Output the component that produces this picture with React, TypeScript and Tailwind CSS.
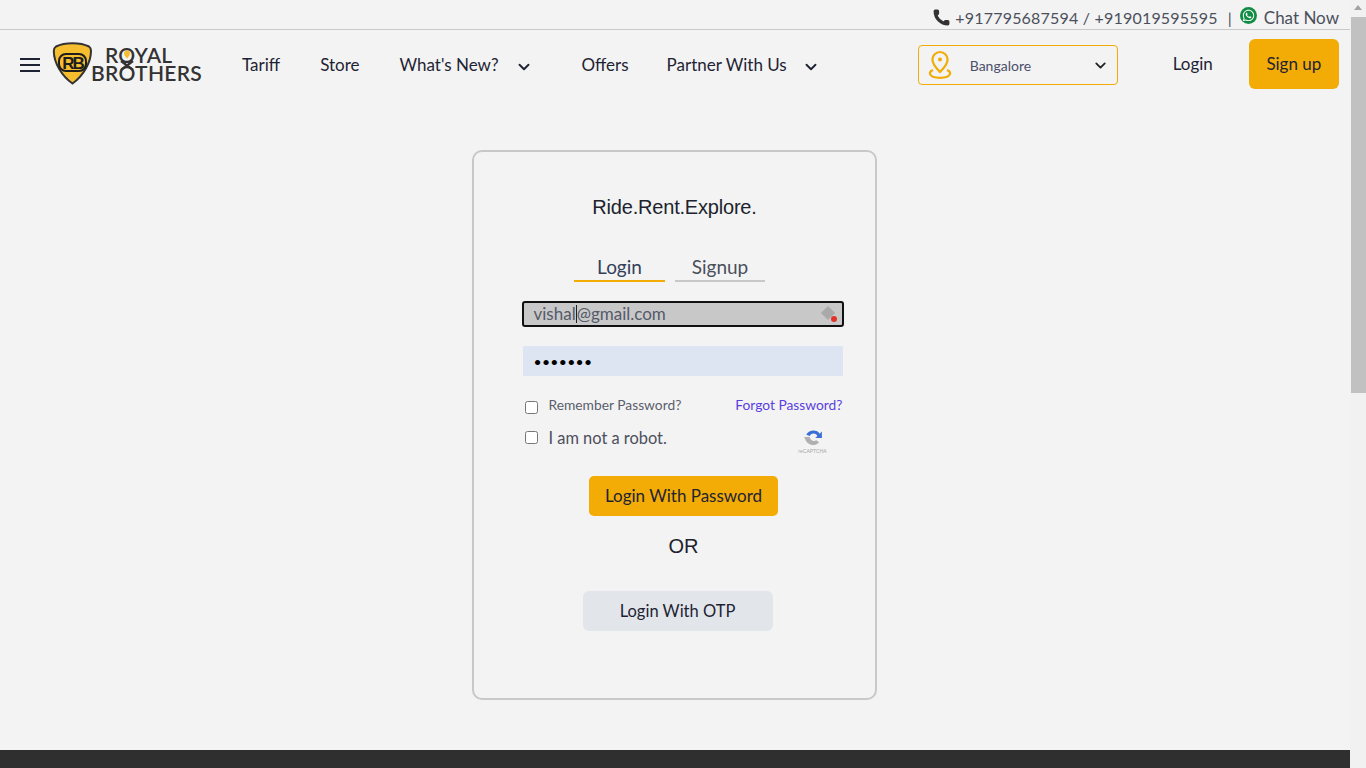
import { ChevronDown, Phone } from 'lucide-react'
import { FaWhatsapp } from 'react-icons/fa'

function Logo() {
  return (
    <svg width="152" height="44" viewBox="0 0 152 44" className="shrink-0">
      <path
        d="M20.500 1.200 C27 1.200 33 2.500 37 4.500 C38.500 5.500 39 7 39 9 C39 20 32 33 20.500 41.500 C10 34 1.800 21 1.800 9 C1.800 7 2.500 5.500 4 4.500 C8 2.500 14 1.200 20.500 1.200 Z"
        fill="#f6bd2f"
        stroke="#333"
        strokeWidth="2"
      />
      <rect x="7" y="12" width="27" height="17" rx="7" fill="none" stroke="#1d1d1d" strokeWidth="2" />
      <text x="20.500" y="27" textAnchor="middle" fontFamily="'Liberation Sans', sans-serif" fontSize="17" fontWeight="700" letterSpacing="-2" fill="#1d1d1d">
        RB
      </text>
      <text x="53" y="20.500" fontFamily="Lato, sans-serif" fontSize="21" fontWeight="600" letterSpacing="0.2" fill="#333">
        ROYAL
      </text>
      <text x="39" y="39" fontFamily="Lato, sans-serif" fontSize="21" fontWeight="600" letterSpacing="0.3" fill="#333">
        BROTHERS
      </text>
      <path d="M69 19 L81 28 M81 19 L69 28" fill="none" stroke="#333" strokeWidth="2.200" />
      <path d="M75 8.500a3 3 0 0 1 3 3c0 2.200-3 5-3 5s-3-2.800-3-5a3 3 0 0 1 3-3Z" fill="#f6bd2f" />
    </svg>
  )
}

function RecaptchaIcon() {
  return (
    <div className="flex flex-col items-center w-[28px]">
      <svg width="22" height="20" viewBox="0 0 18 18">
        <path d="M3 7 A7 7 0 0 1 15 6 L17 4 V10 H11 L13 8 A4 4 0 0 0 6 8 Z" fill="#3b6fd8" />
        <path d="M1 9 H6 A4 4 0 0 0 12 12 L14.500 14 A7.500 7.500 0 0 1 2 11 Z" fill="#b0b0b0" />
      </svg>
      <span className="mt-[1px] text-[5px] leading-[7px] text-[#a8a8a8] font-['Liberation_Sans',sans-serif]">reCAPTCHA</span>
    </div>
  )
}

export default function App() {
  return (
    <div className="flex h-screen overflow-hidden bg-[#f3f3f3] font-['Lato',sans-serif] text-[#1e2333]">
      <div className="flex flex-col flex-1 min-w-0">
        {/* Top strip */}
        <div className="h-[30px] shrink-0 border-b border-[#c9c9c9] flex items-center justify-end pt-[6px] pr-[11px] text-[#4b4f5c]">
          <Phone className="w-[19px] h-[19px] mr-[4px] text-[#333]" fill="#333" strokeWidth={0} />
          <span className="text-[16px] tracking-[0.2px]">+917795687594 / +919019595595</span>
          <span className="ml-[10px] mr-[8px] text-[16px]">|</span>
          <span className="w-[17px] h-[17px] mb-[4px] rounded-full bg-[#128c45] flex items-center justify-center">
            <FaWhatsapp className="w-[13px] h-[13px] text-white" />
          </span>
          <span className="ml-[7px] text-[17px]">Chat Now</span>
        </div>

        {/* Nav */}
        <header className="h-[70px] shrink-0 flex items-center text-[17px]">
          <div className="ml-[20px] w-[20px] flex flex-col gap-[4px]">
            <span className="h-[2px] bg-[#1e2333]" />
            <span className="h-[2px] bg-[#1e2333]" />
            <span className="h-[2px] bg-[#1e2333]" />
          </div>
          <div className="ml-[12px] mb-[2px]">
            <Logo />
          </div>
          <a className="ml-[38px]">Tariff</a>
          <a className="ml-[40px]">Store</a>
          <a className="ml-[40px]">What's New?</a>
          <ChevronDown className="ml-[16px] mt-[3px] w-[18px] h-[18px]" strokeWidth={2.500} />
          <a className="ml-[49px]">Offers</a>
          <a className="ml-[38px]">Partner With Us</a>
          <ChevronDown className="ml-[15px] mt-[3px] w-[18px] h-[18px]" strokeWidth={2.500} />
          <div className="ml-[98px] w-[200px] h-[40px] rounded-[4px] border border-[#f2ac05] flex items-center px-[8px]">
            <svg width="26" height="30" viewBox="0 0 26 30" fill="none" stroke="#f2ac05" strokeWidth="2.200">
              <path d="M13 2a7.600 7.600 0 0 1 7.600 7.600c0 5-7.600 12.400-7.600 12.400S5.400 14.600 5.400 9.600A7.600 7.600 0 0 1 13 2Z" />
              <circle cx="13" cy="9.500" r="2" fill="#f2ac05" stroke="none" />
              <path d="M6 20c-2.400 1-3.500 2.400-3 4 .8 2.400 5 3.800 10 3.800s9.200-1.400 10-3.800c.5-1.600-.6-3-3-4" />
            </svg>
            <span className="ml-[17px] mt-[1px] text-[14px] text-[#4b4f6b] flex-1">Bangalore</span>
            <ChevronDown className="w-[17px] h-[17px] text-[#222]" strokeWidth={2.500} />
          </div>
          <a className="ml-[55px] mb-[2px]">Login</a>
          <button className="ml-[36px] mb-[2px] w-[90px] h-[50px] rounded-[6px] bg-[#f2ac05] text-[#1e2333]">Sign up</button>
        </header>

        {/* Login card */}
        <main className="flex-1 pl-[472px] pt-[50px]">
          <div className="w-[405px] h-[550px] rounded-[10px] border-2 border-[#c8c8c8] pt-[41px] flex flex-col items-center">
            <h1 className="text-[20px] leading-[28px] tracking-[-0.2px] font-['Liberation_Sans',sans-serif] text-[#20232d]">Ride.Rent.Explore.</h1>

            <div className="mt-[31px] mr-[10px] flex gap-[10px] text-[19px] leading-[26px]">
              <div className="w-[91px] h-[30px] pt-[2px] border-b-2 border-[#f2ac05] text-center text-[#33405a]">Login</div>
              <div className="w-[90px] h-[30px] pt-[2px] border-b-2 border-[#c8c8c8] text-center text-[#4b4f5c]">Signup</div>
            </div>

            <div className="mt-[19px] ml-[16px] w-[322px] h-[26px] rounded-[3px] border-2 border-[#111] bg-[#c8c8c8] flex items-center pl-[10px] pr-[5px] text-[17px] text-[#555a68]">
              <span>vishal</span>
              <span className="w-px h-[18px] bg-[#222]" />
              <span className="flex-1">@gmail.com</span>
              <span className="relative w-[14px] h-[16px]">
                <span className="block w-[10px] h-[10px] mt-[2px] rotate-45 bg-[#a9a9a9]" />
                <span className="absolute right-0 bottom-0 w-[6px] h-[6px] rounded-full bg-[#e2332b]" />
              </span>
            </div>

            <div className="mt-[19px] ml-[16px] w-[320px] h-[30px] bg-[#dee5f2] flex items-center pl-[11px] text-[14px] text-black tracking-[0.3px]">
              •••••••
            </div>

            <div className="mt-[21px] ml-[16px] w-[320px] flex items-center justify-between h-[18px] text-[13.800px]">
              <label className="flex items-center text-[#5a5e6c]">
                <input type="checkbox" className="ml-[2px] mt-[3px] w-[13px] h-[13px]" />
                <span className="ml-[11px] mb-[2px]">Remember Password?</span>
              </label>
              <a className="mb-[2px] text-[#5a3fe0]">Forgot Password?</a>
            </div>

            <div className="mt-[11px] ml-[16px] w-[320px] flex items-start justify-between h-[30px]">
              <label className="flex items-center text-[16.400px] text-[#4b4f5c]">
                <input type="checkbox" className="ml-[2px] mb-[2px] w-[13px] h-[13px]" />
                <span className="ml-[11px]">I am not a robot.</span>
              </label>
              <div className="mr-[16px] mt-[1px]">
                <RecaptchaIcon />
              </div>
            </div>

            <button className="mt-[20px] ml-[18px] w-[189px] h-[40px] rounded-[5px] bg-[#f2ac05] text-[17px] text-[#1e2333]">
              Login With Password
            </button>
            <div className="mt-[18px] ml-[18px] text-[20px] leading-[24px] font-['Liberation_Sans',sans-serif] text-[#20232d]">OR</div>
            <button className="mt-[33px] ml-[6px] w-[190px] h-[40px] rounded-[6px] bg-[#e2e6ea] text-[16.500px] text-[#1e2333]">
              Login With OTP
            </button>
          </div>
        </main>

        {/* Footer edge */}
        <div className="h-[18px] shrink-0 bg-[#2f2f2f]" />
      </div>

      {/* Scrollbar */}
      <div className="w-[16px] shrink-0 bg-[#f1f1f1] flex flex-col items-center">
        <div className="mt-[5px] w-0 h-0 border-x-[4px] border-x-transparent border-b-[5px] border-b-[#a3a3a3]" />
        <div className="mt-[7px] w-[15px] h-[376px] bg-[#c1c1c1]" />
      </div>
    </div>
  )
}
